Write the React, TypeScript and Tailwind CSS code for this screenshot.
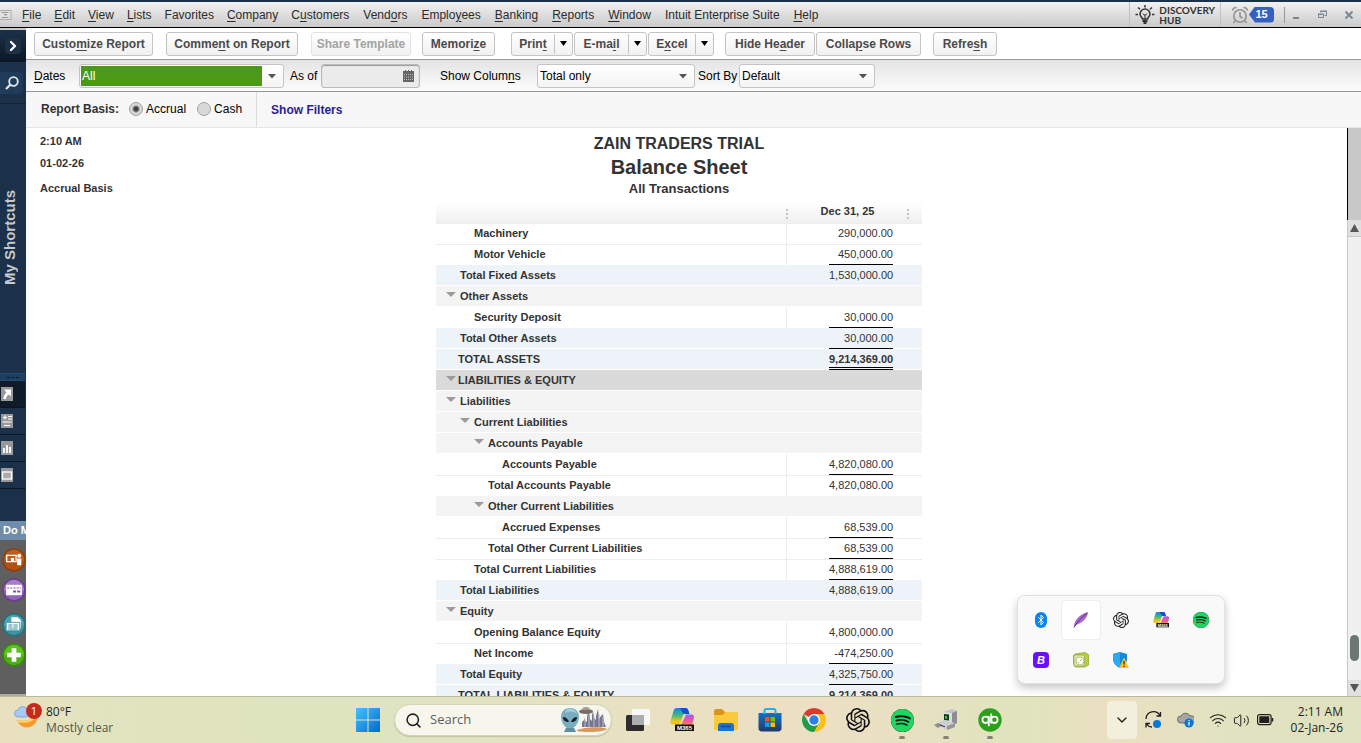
import type { ReactNode } from 'react';
import { SiOpenai, SiSpotify } from 'react-icons/si';
import { Bluetooth, ChevronDown, ChevronRight, Search, Wifi, Volume2 } from 'lucide-react';

type Tone = 'plain' | 'group' | 'total' | 'section';

interface ReportRow {
  label: string;
  indent: string;
  tone: Tone;
  amount?: string;
  rule?: 'single' | 'double';
  line?: boolean;
}

// indent is the left padding of the label, group rows keep 14px of it for the triangle
const ROWS: ReportRow[] = [
  { label: 'Machinery', indent: 'pl-[38px]', tone: 'plain', amount: '290,000.00', line: true },
  { label: 'Motor Vehicle', indent: 'pl-[38px]', tone: 'plain', amount: '450,000.00', rule: 'single', line: true },
  { label: 'Total Fixed Assets', indent: 'pl-6', tone: 'total', amount: '1,530,000.00' },
  { label: 'Other Assets', indent: 'pl-[10px]', tone: 'group' },
  { label: 'Security Deposit', indent: 'pl-[38px]', tone: 'plain', amount: '30,000.00', rule: 'single' },
  { label: 'Total Other Assets', indent: 'pl-6', tone: 'total', amount: '30,000.00', rule: 'single' },
  { label: 'TOTAL ASSETS', indent: 'pl-[22px]', tone: 'total', amount: '9,214,369.00', rule: 'double' },
  { label: 'LIABILITIES & EQUITY', indent: 'pl-[10px]', tone: 'section' },
  { label: 'Liabilities', indent: 'pl-[10px]', tone: 'group' },
  { label: 'Current Liabilities', indent: 'pl-6', tone: 'group' },
  { label: 'Accounts Payable', indent: 'pl-[38px]', tone: 'group' },
  { label: 'Accounts Payable', indent: 'pl-[66px]', tone: 'plain', amount: '4,820,080.00', rule: 'single' },
  { label: 'Total Accounts Payable', indent: 'pl-[52px]', tone: 'plain', amount: '4,820,080.00', line: true },
  { label: 'Other Current Liabilities', indent: 'pl-[38px]', tone: 'group' },
  { label: 'Accrued Expenses', indent: 'pl-[66px]', tone: 'plain', amount: '68,539.00', rule: 'single' },
  { label: 'Total Other Current Liabilities', indent: 'pl-[52px]', tone: 'plain', amount: '68,539.00', rule: 'single', line: true },
  { label: 'Total Current Liabilities', indent: 'pl-[38px]', tone: 'plain', amount: '4,888,619.00', rule: 'single', line: true },
  { label: 'Total Liabilities', indent: 'pl-6', tone: 'total', amount: '4,888,619.00' },
  { label: 'Equity', indent: 'pl-[10px]', tone: 'group' },
  { label: 'Opening Balance Equity', indent: 'pl-[38px]', tone: 'plain', amount: '4,800,000.00' },
  { label: 'Net Income', indent: 'pl-[38px]', tone: 'plain', amount: '-474,250.00', rule: 'single', line: true },
  { label: 'Total Equity', indent: 'pl-6', tone: 'total', amount: '4,325,750.00', rule: 'single' },
  { label: 'TOTAL LIABILITIES & EQUITY', indent: 'pl-[22px]', tone: 'total', amount: '9,214,369.00', rule: 'double' },
];

const TONES: Record<Tone, string> = {
  plain: 'bg-white',
  group: 'bg-[#f4f4f4] shadow-[inset_0_-1px_0_#fff]',
  total: 'bg-[#edf3f8] shadow-[inset_0_-1px_0_#fff]',
  section: 'bg-[#dadada] shadow-[inset_0_-1px_0_#fff]',
};

const LIST_MENUS = ['&File', '&Edit', '&View', '&Lists', 'Favorites', '&Company', 'C&ustomers'];
const WORK_MENUS = ['Vend&ors', 'Emplo&yees', '&Banking', '&Reports', '&Window', 'Intuit Enterprise Suite', '&Help'];

// "&" marks the access key
function Mnemonic({ text }: { text: string }) {
  const at = text.indexOf('&');
  if (at < 0) return <>{text}</>;
  return (
    <>
      {text.slice(0, at)}
      <span className="underline underline-offset-2">{text[at + 1]}</span>
      {text.slice(at + 2)}
    </>
  );
}

function ToolButton({ text, width, disabled }: { text: string; width: string; disabled?: boolean }) {
  return (
    <button
      type="button"
      disabled={disabled}
      className={`${width} h-6 shrink-0 rounded-[3px] border bg-gradient-to-b from-white to-[#f1f1f1] text-xs font-bold whitespace-nowrap ${
        disabled ? 'border-[#e2e2e2] text-[#a3a3a3]' : 'border-[#c4c4c4] text-[#4a4a4a]'
      }`}
    >
      <Mnemonic text={text} />
    </button>
  );
}

function SplitButton({ text, width }: { text: string; width: string }) {
  return (
    <div className={`${width} flex h-6 shrink-0 items-center rounded-[3px] border border-[#c4c4c4] bg-gradient-to-b from-white to-[#f1f1f1]`}>
      <button type="button" className="h-5 flex-1 text-xs font-bold text-[#4a4a4a]">
        <Mnemonic text={text} />
      </button>
      <button type="button" aria-label="More options" className="flex h-5 w-[18px] items-center justify-center border-l border-[#c4c4c4]">
        <svg width="7" height="5" viewBox="0 0 7 5"><path d="M0 0h7L3.500 5z" fill="#000" /></svg>
      </button>
    </div>
  );
}

function Combo({ id, value, width, active }: { id: string; value: string; width: string; active?: boolean }) {
  return (
    <div className={`${width} flex h-6 shrink-0 items-center rounded-[3px] border border-[#c4c4c4] bg-gradient-to-b from-white to-[#f4f4f4] p-px`}>
      <select
        id={id}
        defaultValue={value}
        className={`h-5 min-w-0 flex-1 appearance-none pl-px text-xs outline-none ${active ? 'bg-[#4b9a17] text-white' : 'text-black'}`}
      >
        <option value={value}>{value}</option>
      </select>
      <svg width="20" height="20" viewBox="0 0 20 20"><path d="M6 8h8l-4 4.500z" fill="#555" /></svg>
    </div>
  );
}

function MenuBar() {
  return (
    <header className="flex h-[28px] shrink-0 items-center border-t-2 border-b border-t-[#1b3149] border-b-black bg-gradient-to-b from-[#f1f1f1] to-[#cbcbcb] text-xs text-[#2b2b2b]">
      <svg width="12" height="10" viewBox="0 0 12 10" className="mr-[10px] shrink-0">
        <rect x="-1" y=".5" width="12" height="9" fill="#e2e2e2" stroke="#aaa" />
        <path d="M1.500 2.500h7M1.500 7.500h7" stroke="#999" />
        <path d="M3.500 4h4L5.500 6z" fill="#999" />
      </svg>
      <nav className="flex flex-1 gap-[14px]">
        <div className="flex gap-[13px]">
          {LIST_MENUS.map((m) => (
            <button key={m} type="button" className="whitespace-nowrap"><Mnemonic text={m} /></button>
          ))}
        </div>
        <div className="flex gap-[14px]">
          {WORK_MENUS.map((m) => (
            <button key={m} type="button" className="whitespace-nowrap"><Mnemonic text={m} /></button>
          ))}
        </div>
      </nav>
      <button type="button" className="flex h-full items-center gap-1 border-x border-[#c0c0c0] px-[5px] text-[#333]">
        <svg width="20" height="20" viewBox="0 0 20 20" fill="none" stroke="#333" strokeWidth="1.500">
          <path d="M7.500 14c0-1.500-2.500-2.300-2.500-5a5 5 0 0 1 10 0c0 2.700-2.500 3.500-2.500 5z" />
          <path d="M7.500 16h5M8.500 18h3" strokeWidth="2" />
          <path d="M10 0v2.500M3 2.500L5 4.200M17 2.500l-2 1.700M.5 9.500H3M17 9.500h2.500" />
          <path d="M8 8.500l1.200 1.500h1.600L12 8.500M10 10v4" strokeWidth="1" />
        </svg>
        <span className="flex flex-col text-left font-['Lato'] text-[10px] leading-[10px] font-bold">
          <span>DISCOVERY</span>
          <span>HUB</span>
        </span>
      </button>
      <div className="flex h-full items-center pl-[10px]">
        <svg width="18" height="18" viewBox="0 0 18 18" fill="none" stroke="#929292" strokeWidth="1.600">
          <circle cx="9" cy="10" r="6.200" />
          <path d="M9 6v4.500l2.500 1.500M1.500 4.500a4 4 0 0 1 4-3M16.500 4.500a4 4 0 0 0-4-3M4 15l-1.500 2M14 15l1.500 2" />
        </svg>
        <span className="flex h-4 w-[25px] items-center justify-center rounded-sm bg-[#365fc2] text-[11px] font-bold text-white [clip-path:polygon(0_50%,6px_0,100%_0,100%_100%,6px_100%)]">
          15
        </span>
        <span className="ml-[10px] h-4 w-px bg-[#999]" />
        <button type="button" aria-label="Minimize" className="ml-2">
          <svg width="7" height="12" viewBox="0 0 7 12"><path d="M0 8h6v2H0z" fill="#7a8794" /></svg>
        </button>
        <button type="button" aria-label="Restore" className="ml-[18px]">
          <svg width="9" height="9" viewBox="0 0 9 9" fill="none" stroke="#7a8794">
            <path d="M2.500 2.500v-1h6v4h-2M2 1h7" />
            <path d="M.5 4.500h5v3h-5zM0 4h6" />
          </svg>
        </button>
        <button type="button" aria-label="Close" className="mr-2 ml-[18px]">
          <svg width="8" height="8" viewBox="0 0 8 8" stroke="#7a8794" strokeWidth="2"><path d="M.5.5l7 7M7.500.5l-7 7" /></svg>
        </button>
      </div>
    </header>
  );
}

function Sidebar() {
  const tab = 'flex h-[27px] w-[25px] items-center border-b border-[#0c1622] pl-px';
  return (
    <aside className="flex w-[26px] shrink-0 flex-col overflow-hidden border-t-2 border-[#c9c9c9] bg-[#1b3149]">
      <div className="flex h-8 items-center justify-center bg-gradient-to-b from-[#1b3149] to-[#0b1725]">
        <button type="button" aria-label="Expand" className="rounded-sm bg-[#1e3044] text-white">
          <ChevronRight size={16} strokeWidth={3.5} />
        </button>
      </div>
      <button type="button" aria-label="Search" className="mt-[10px] flex h-[22px] w-[23px] items-center justify-center rounded-r-sm bg-[#213c5b]">
        <svg width="14" height="14" viewBox="0 0 14 14" fill="none" stroke="#e4e8ec" strokeWidth="1.800">
          <circle cx="8.500" cy="5.500" r="4.300" />
          <path d="M5.500 8.500L1 13" strokeWidth="2.200" />
        </svg>
      </button>
      <div className="mt-[9px] h-px bg-[#132435]" />
      <div className="flex h-[268px] items-center">
        <span className="rotate-180 text-[15px] leading-5 font-bold whitespace-nowrap text-[#c5c9cd] [writing-mode:vertical-rl]">
          My Shortcuts
        </span>
      </div>
      <div className="mt-px flex h-2 w-[25px] items-center justify-center border-y border-[#26496e] bg-[#1d3f63]">
        <span className="w-3 border-t border-dashed border-[#0c1c2c]" />
      </div>
      <button type="button" aria-label="Shortcuts" className={`${tab} bg-[#0f1b29]`}>
        <svg width="12" height="14" viewBox="0 0 12 14">
          <path d="M0 0h12v14H0z" fill="#999" />
          <path d="M3 2.500h7v7L8 7.500c-2 1-3 2.500-3 4.500H2.500c0-3 1-5 3-6.500z" fill="#fff" />
        </svg>
      </button>
      <button type="button" aria-label="Balances" className={tab}>
        <svg width="12" height="14" viewBox="0 0 12 14">
          <path d="M0 0h12v14H0z" fill="#999" />
          <path d="M2 3.500h4M4 1.500v4M7 2.500h4M7 5h4M1.500 8h9M3 11.500h6" stroke="#fff" strokeWidth="1.200" />
        </svg>
      </button>
      <button type="button" aria-label="Reports" className={tab}>
        <svg width="12" height="14" viewBox="0 0 12 14">
          <path d="M0 0h12v14H0z" fill="#999" />
          <path d="M3 12V7M6 12V4M9 12V6" stroke="#fff" strokeWidth="1.800" />
        </svg>
      </button>
      <button type="button" aria-label="Open windows" className={tab}>
        <svg width="12" height="14" viewBox="0 0 12 14">
          <path d="M0 0h12v14H0z" fill="#999" />
          <rect x="1.500" y="4" width="9" height="7" fill="#aaa" stroke="#fff" strokeWidth="1.300" />
        </svg>
      </button>
      <div className="mt-8 h-[19px] shrink-0 overflow-hidden bg-[#6f8cab] pl-[3px] text-[11px] leading-[18px] font-bold whitespace-nowrap text-white">
        Do More
      </div>
      <div className="flex flex-1 flex-col items-end border-b-2 border-[#aaa] bg-[#5f5f5f] pt-2">
        <CircleIcon label="Payroll" color="#c05f1b" dark="#8f3f0a">
          <path d="M4.500 7h9v6h-9z" fill="none" stroke="#fff" strokeWidth="1.200" />
          <path d="M8.500 9.500h3V13h-3zM14.500 10h4v6.500h-4z" fill="#fff" />
          <circle cx="16.500" cy="7.500" r="1.900" fill="#fff" />
        </CircleIcon>
        <div className="h-[6px]" />
        <CircleIcon label="Payments" color="#a97cc9" dark="#6b3a94">
          <path d="M4 6.500h15v10H4z" fill="#fff" />
          <path d="M5 9.500h13" stroke="#8354aa" strokeDasharray="2 1" />
          <path d="M10.500 12h3v2h-3zM14.500 12h3v2h-3z" fill="#8354aa" />
        </CircleIcon>
        <div className="h-[11px]" />
        <CircleIcon label="Order checks" color="#4fa3b0" dark="#1f7481">
          <path d="M9 4h6l3 3v8H9z" fill="#fff" />
          <path d="M4 9h13v8H4z" fill="#fff" stroke="#39909d" strokeWidth=".8" />
          <path d="M6 11.500h4M11 11.500h4M6 13.500h4M11 13.500h4M6 15.300h9" stroke="#39909d" />
        </CircleIcon>
        <div className="h-[6px]" />
        <CircleIcon label="Add" color="#5cc21f" dark="#348a0a">
          <path d="M11.500 5v13M5 11.500h13" stroke="#fff" strokeWidth="4.500" />
        </CircleIcon>
      </div>
    </aside>
  );
}

function CircleIcon({ label, color, dark, children }: { label: string; color: string; dark: string; children: ReactNode }) {
  return (
    <button type="button" aria-label={label} className="h-6 w-6">
      <svg width="24" height="24" viewBox="0 0 23 23">
        <circle cx="11.500" cy="11.500" r="10.500" fill={color} stroke={dark} strokeWidth="1.500" />
        <path d="M1.700 12a9.800 9.800 0 0 0 19.600 0z" fill={dark} opacity=".35" />
        {children}
      </svg>
    </button>
  );
}

function Toolbar() {
  return (
    <div className="flex h-8 shrink-0 items-center border-b border-[#999] bg-white pl-2">
      <ToolButton text="Custo&mize Report" width="w-[119px]" />
      <div className="w-[13px]" />
      <ToolButton text="Comme&nt on Report" width="w-[132px]" />
      <div className="w-[13px]" />
      <ToolButton text="Share Template" width="w-[100px]" disabled />
      <div className="w-[11px]" />
      <ToolButton text="Memori&ze" width="w-[73px]" />
      <div className="ml-4 flex gap-px">
        <SplitButton text="Prin&t" width="w-[62px]" />
        <SplitButton text="E-ma&il" width="w-[73px]" />
        <SplitButton text="E&xcel" width="w-[66px]" />
      </div>
      <div className="mr-3 ml-[11px] flex gap-px">
        <ToolButton text="Hide He&ader" width="w-[90px]" />
        <ToolButton text="Colla&pse Rows" width="w-[105px]" />
      </div>
      <ToolButton text="Refre&sh" width="w-[64px]" />
    </div>
  );
}

function Options() {
  return (
    <div className="flex h-8 shrink-0 items-center border-b border-[#999] bg-gradient-to-b from-[#e4e4e4] to-[#fcfcfc] pl-2 text-xs whitespace-nowrap text-black">
      <label htmlFor="dates" className="w-[45px]"><Mnemonic text="&Dates" /></label>
      <Combo id="dates" value="All" width="w-[205px]" active />
      <label htmlFor="asof" className="ml-[6px] w-[31px]">As of</label>
      <div className="flex h-6 w-[99px] items-center rounded-[3px] border border-[#bbb] bg-[#ebebeb] shadow-[inset_0_1px_1px_#999]">
        <input id="asof" type="text" className="h-5 min-w-0 flex-1 bg-transparent px-1 outline-none" />
        <svg width="11" height="12" viewBox="0 0 11 12" className="mr-[5px]">
          <path d="M0 1h11v11H0zM2 0h1v1H2zM5 0h1v1H5zM8 0h1v1H8z" fill="#666" />
          <path d="M1 4.500h9M1 7h9M1 9.500h9" stroke="#bbb" strokeDasharray="1 1" />
        </svg>
      </div>
      <label htmlFor="columns" className="ml-5 w-[97px]"><Mnemonic text="Show Colum&ns" /></label>
      <Combo id="columns" value="Total only" width="w-[158px]" />
      <label htmlFor="sort" className="ml-[3px] w-[41px]">Sort By</label>
      <Combo id="sort" value="Default" width="w-[136px]" />
    </div>
  );
}

function BasisBar() {
  const radio =
    'h-[14px] w-[14px] appearance-none rounded-full border border-[#a2a2a2] bg-[#d8d8d8] checked:bg-[radial-gradient(circle,#444_2px,#d8d8d8_4px)]';
  return (
    <div className="flex h-9 shrink-0 items-center border-b border-[#e6e6e6] bg-[#f7f7f7] pl-[15px] text-xs text-black">
      <div role="radiogroup" aria-labelledby="basis" className="flex h-full items-center border-r border-[#dcdcdc] pr-[14px] pb-px">
        <span id="basis" className="mr-[10px] font-bold text-[#333]">Report Basis:</span>
        <label className="mr-[11px] flex items-center gap-[3px]">
          <input type="radio" name="basis" defaultChecked className={radio} />
          Accrual
        </label>
        <label className="flex items-center gap-[3px]">
          <input type="radio" name="basis" className={radio} />
          Cash
        </label>
      </div>
      <a href="#filters" className="ml-[14px] font-bold text-[#2a1f8f]">Show Filters</a>
    </div>
  );
}

function Grip() {
  return (
    <svg width="2" height="11" viewBox="0 0 2 11" className="mt-1 shrink-0">
      <path d="M0 0h2v2H0zM0 4h2v2H0zM0 8h2v2H0z" fill="#c4c4c4" />
    </svg>
  );
}

function Report() {
  return (
    <div className="grid min-w-0 flex-1 grid-cols-[1fr_486px_1fr] overflow-hidden bg-white pr-[15px] text-[#333]">
      <div className="pt-[6px] pl-[14px] text-[11px] leading-[14px] font-bold">
        <p>2:10 AM</p>
        <p className="mt-2">01-02-26</p>
        <p className="mt-[11px]">Accrual Basis</p>
      </div>
      <div>
        <div className="pt-[6px] text-center font-bold">
          <h2 className="text-base leading-[20px]">ZAIN TRADERS TRIAL</h2>
          <h1 className="text-xl leading-[26px]">Balance Sheet</h1>
          <p className="text-[13px] leading-[18px]">All Transactions</p>
        </div>
        <table className="mt-1 w-full table-fixed border-separate border-spacing-0 text-[11px]">
          <colgroup>
            <col />
            <col className="w-[136px]" />
          </colgroup>
          <thead>
            <tr className="h-[21px] bg-gradient-to-b from-white to-[#f0f0f0]">
              <td className="p-0" />
              <th scope="col" className="p-0">
                <div className="flex h-[21px] items-center pr-[13px]">
                  <Grip />
                  <span className="flex-1 pb-[3px]">Dec 31, 25</span>
                  <Grip />
                </div>
              </th>
            </tr>
          </thead>
          <tbody>
            {ROWS.map((row, i) => {
              const line = row.line ? 'border-t border-[#ececec] leading-[18px]' : 'leading-[20px]';
              if (!row.amount) {
                return (
                  <tr key={i}>
                    <th colSpan={2} scope="rowgroup" className="p-0 text-left">
                      <div className={`flex h-[21px] items-center ${row.indent} ${TONES[row.tone]}`}>
                        <svg width="10" height="5" viewBox="0 0 10 5" className="mb-[5px] shrink-0"><path d="M0 0h10L5 5z" fill="#9b9b9b" /></svg>
                        <span className={row.tone === 'section' ? 'ml-[2px]' : 'ml-1'}>{row.label}</span>
                      </div>
                    </th>
                  </tr>
                );
              }
              const rule = row.rule === 'double' ? 'border-b-[3px] border-double border-black font-bold' : row.rule === 'single' ? 'border-b border-black' : '';
              return (
                <tr key={i}>
                  <th scope="row" className="p-0 text-left">
                    <div className={`h-[21px] ${row.indent} ${TONES[row.tone]} ${line}`}>{row.label}</div>
                  </th>
                  <td className="p-0">
                    <div className={`flex h-[21px] justify-end pr-[29px] ${TONES[row.tone]} ${line} ${row.tone === 'plain' ? 'border-l border-l-[#ececec]' : ''}`}>
                      <span className={`w-16 text-right whitespace-nowrap ${rule}`}>{row.amount}</span>
                    </div>
                  </td>
                </tr>
              );
            })}
          </tbody>
        </table>
      </div>
    </div>
  );
}

function ScrollBar() {
  return (
    <div className="flex w-[14px] shrink-0 flex-col border-l border-[#c8c8c8] bg-[#f0f0f0]">
      <div className="-ml-px h-[92px] border-l border-black bg-[#c8c8c8]" />
      <button type="button" aria-label="Scroll up" className="flex h-4 items-center justify-center bg-[#e0e0e0]">
        <svg width="9" height="8" viewBox="0 0 9 8"><path d="M4.500 0L9 8H0z" fill="#555" /></svg>
      </button>
      <div className="flex flex-1 flex-col items-center justify-end border-t border-[#c8c8c8] pb-[19px]">
        <div className="h-[26px] w-[9px] rounded-full bg-[#6d7575]" />
      </div>
      <button type="button" aria-label="Scroll down" className="flex h-4 items-center justify-center bg-[#e0e0e0]">
        <svg width="9" height="8" viewBox="0 0 9 8"><path d="M4.500 8L9 0H0z" fill="#555" /></svg>
      </button>
    </div>
  );
}

function CopilotIcon({ size }: { size: number }) {
  return (
    <svg width={size} height={size} viewBox="0 0 24 24">
      <defs>
        <linearGradient id="m365a" x1="0" y1="0" x2="0" y2="1">
          <stop offset="0" stopColor="#1b7fe0" />
          <stop offset=".4" stopColor="#35b88a" />
          <stop offset=".8" stopColor="#f0c419" />
        </linearGradient>
        <linearGradient id="m365b" x1="0" y1="0" x2="0" y2="1">
          <stop offset="0" stopColor="#a45cf0" />
          <stop offset=".6" stopColor="#f0569a" />
          <stop offset="1" stopColor="#f58a4a" />
        </linearGradient>
      </defs>
      <path d="M7 0h8c2 0 3 1 3.500 3l1 3h-4c-2 0-2.500 1-3 3L11 14c-.5 2-1.500 2.500-3 2.500H3C.5 16.500 0 15 .5 13L3.500 3C4 1 5 0 7 0z" fill="url(#m365a)" />
      <path d="M10 0h5c2 0 3 1 3.500 3l1 3h-4C13.500 6 12.500 5 12 3.500z" fill="#1651c8" />
      <path d="M16 6.500h5c2.500 0 3.500 1.500 3 3.500l-2 7H11z" fill="url(#m365b)" />
      <path d="M5 16.500h19V23H5z" fill="#111" />
      <text x="14.500" y="22" textAnchor="middle" fontSize="6" fontWeight="bold" fill="#fff" fontFamily="Liberation Sans">M365</text>
    </svg>
  );
}

function ShieldIcon() {
  return (
    <svg width="16" height="16" viewBox="0 0 16 16">
      <path d="M7 0l7 2v5c0 4-3 7-7 9-4-2-7-5-7-9V2z" fill="#1489dd" />
      <path d="M7 0v16c-4-2-7-5-7-9V2z" fill="#2aa9ee" />
      <path d="M11 5.500L16 16H6z" fill="#ffc20e" />
      <path d="M11 9v3.500M11 13.500V15" stroke="#222" strokeWidth="1.200" />
    </svg>
  );
}

function TrayPopup() {
  const cell = 'flex h-10 w-10 items-center justify-center';
  return (
    <div className="absolute right-[136px] bottom-[12px] grid grid-cols-[repeat(5,40px)] rounded-lg border border-[#e2e2e2] bg-[#f9f9f9] px-[3px] pt-1 pb-[3px] shadow-[0_4px_8px_rgba(0,0,0,0.22)]">
      <button type="button" aria-label="Bluetooth" className={cell}>
        <span className="flex h-4 w-3 items-center justify-center rounded-full bg-[#0a84f5] text-white"><Bluetooth size={12} /></span>
      </button>
      <button type="button" aria-label="Pen" className="flex h-10 w-10 items-center justify-center rounded border border-[#ededed] bg-white">
        <svg width="16" height="16" viewBox="0 0 16 16">
          <path d="M1 15C1 9 5 3 15 0c0 5-5 11-12 13z" fill="#a868cf" />
          <path d="M1 15.500C4 10 8 6 14 1" stroke="#5c2c83" fill="none" />
        </svg>
      </button>
      <button type="button" aria-label="ChatGPT" className={cell}><SiOpenai size={16} color="#222" /></button>
      <button type="button" aria-label="Copilot" className={cell}><CopilotIcon size={16} /></button>
      <button type="button" aria-label="Spotify" className={cell}>
        <span className="rounded-full bg-[#121212]"><SiSpotify size={16} color="#1ed760" /></span>
      </button>
      <button type="button" aria-label="Bolt" className={cell}>
        <span className="flex h-4 w-4 items-center justify-center rounded bg-[#6a12ff] text-[11px] font-bold text-white italic">B</span>
      </button>
      <button type="button" aria-label="Updater" className={cell}>
        <svg width="16" height="16" viewBox="0 0 16 16">
          <path d="M2 2l10-1.500 3.500 2V13L12 15H2L.5 12V3.500z" fill="#b9cf3a" stroke="#8b9d31" strokeWidth=".7" />
          <rect x="1" y="3" width="10.500" height="11" rx="1.500" fill="#dde6a3" stroke="#96a65c" strokeWidth=".7" />
          <circle cx="7" cy="9" r="4" fill="#fff" stroke="#b9c47a" />
          <path d="M7 9l2-2M5 11l1-1" stroke="#a8bb45" />
        </svg>
      </button>
      <button type="button" aria-label="Windows Security" className={cell}><ShieldIcon /></button>
    </div>
  );
}

function TaskIcon({ label, running, children }: { label: string; running?: boolean; children: ReactNode }) {
  return (
    <button type="button" aria-label={label} className="relative flex h-full w-11 items-center justify-center">
      {children}
      {running && <span className="absolute bottom-1 h-[3px] w-[6px] rounded-full bg-[#858370]" />}
    </button>
  );
}

function Taskbar() {
  return (
    <footer className="grid h-[47px] shrink-0 grid-cols-[1fr_auto_1fr] border-t border-[#b9b99b] bg-[linear-gradient(to_right,#e9e0c0,#dfe4bf_10%,#dfe4c0_30%,#e9e1c2_48%,#eddfc4_60%,#e0e3be_75%,#ebdfc1_82%,#e1e3c0_90%,#e0e1be)] font-['Open_Sans'] text-xs text-[#1f1f1f]">
      <button type="button" className="flex items-center pl-[14px] text-left">
        <svg width="32" height="32" viewBox="0 0 32 32" className="-mt-1 shrink-0">
          <path d="M3 18a10 10 0 1 0 20-6c-4 6-12 8-20 6z" fill="#f69a2b" />
          <path d="M4 19c7 2 14 0 19-6" fill="none" stroke="#ffd36a" strokeWidth="2" />
          <path d="M4 15a3.500 3.500 0 0 1 0-7 5 5 0 0 1 9-1v8z" fill="#a9c8f4" stroke="#7fa5e0" />
          <circle cx="20" cy="9" r="8" fill="#c42b1c" />
          <text x="20" y="13" textAnchor="middle" fontSize="11" fill="#fff" fontFamily="Open Sans">1</text>
        </svg>
        <span className="leading-4">
          80°F<br />
          <span className="text-[#555447]">Mostly clear</span>
        </span>
      </button>
      <div className="flex items-center pr-[3px]">
        <TaskIcon label="Start">
          <svg width="24" height="24" viewBox="0 0 24 24">
            <defs>
              <linearGradient id="win" x1="0" y1="0" x2="1" y2="1">
                <stop offset="0" stopColor="#44c4fb" />
                <stop offset="1" stopColor="#0468cf" />
              </linearGradient>
            </defs>
            <path d="M0 0h11.500v11.500H0zM12.500 0H24v11.500H12.500zM0 12.500h11.500V24H0zM12.500 12.500H24V24H12.500z" fill="url(#win)" />
          </svg>
        </TaskIcon>
        <div className="mx-1 flex h-8 w-[218px] items-center rounded-full border border-[#d4d4b8] bg-[#f7f6ed] pr-[2px] pl-[10px] shadow-[0_1px_1px_rgba(0,0,0,0.15)]">
          <Search size={17} strokeWidth={2.2} className="shrink-0" />
          <input type="text" aria-label="Search" placeholder="Search" className="ml-2 min-w-0 flex-1 bg-transparent text-[13px] outline-none placeholder:text-[#5e5e58]" />
          <svg width="48" height="26" viewBox="0 0 48 26" className="shrink-0">
            <path d="M16 23c6-3 26-4 30-1-2 3-20 4-30 2z" fill="#d9985c" />
            <path d="M21 20v-5l2-2v-3l1 4 2 1V9l2-5 1 8 2 2V8l1-4 1 7 2 2V9l2-7 1 10 2-3 2-2 1 8 2 5z" fill="#77778f" />
            <path d="M24 12v8M28 8v12M33 9v11M38 7v13M42 10v10" stroke="#b9bccb" />
            <ellipse cx="25" cy="4.500" rx="7" ry="2.500" fill="#786d65" />
            <path d="M21 3a4 3 0 0 1 8 0z" fill="#a39b92" />
            <path d="M9 1c6 0 9 4 9 9 0 6-5 12-9 12S0 16 0 10c0-5 3-9 9-9z" fill="#79aebf" />
            <path d="M7 2c4-1 8 1 9 5-4-3-8-3-12-1 0-2 1-3 3-4z" fill="#a5cdd8" />
            <path d="M5 21h8l2 4H3z" fill="#5b8e9f" />
            <path d="M2 10c3 0 5 2 6 5-4 0-6-2-6-5zM16 10c-3 0-5 2-6 5 4 0 6-2 6-5z" fill="#15212a" />
          </svg>
        </div>
        <TaskIcon label="Task view">
          <svg width="24" height="24" viewBox="0 0 24 24">
            <rect x="6" y="1" width="18" height="16" rx="1.500" fill="#f8f8f8" />
            <rect x="0" y="7" width="18" height="16" rx="1.500" fill="#2c2c2c" />
            <path d="M6 7h12v10H6z" fill="#adadad" />
          </svg>
        </TaskIcon>
        <TaskIcon label="Microsoft 365 Copilot"><CopilotIcon size={24} /></TaskIcon>
        <TaskIcon label="File Explorer">
          <svg width="24" height="22" viewBox="0 0 24 22">
            <path d="M0 2c0-1 .5-2 2-2h6l3 3h11c1.500 0 2 1 2 2v6H0z" fill="#d9951a" />
            <path d="M0 6h9l2-3h11c1.500 0 2 1 2 2v16H0z" fill="#fbc93c" />
            <path d="M4 17c0-2 1-3 2.500-3h11c1.500 0 2.500 1 2.500 3v5H4z" fill="#1778c9" />
            <path d="M7 17.500h10" stroke="#0c4f92" strokeWidth="1.500" />
          </svg>
        </TaskIcon>
        <TaskIcon label="Store">
          <svg width="24" height="24" viewBox="0 0 24 24">
            <defs>
              <linearGradient id="store" x1="0" y1="0" x2="0" y2="1">
                <stop offset="0" stopColor="#1373c6" />
                <stop offset="1" stopColor="#23376a" />
              </linearGradient>
            </defs>
            <path d="M.5 5h23v15c0 2-1 3.500-3.500 3.500H4C1.500 23.500.5 22 .5 20z" fill="url(#store)" />
            <path d="M6.500 6V3c0-1.500 1-2 2-2h7c1 0 2 .5 2 2v3" fill="none" stroke="#24b0f0" strokeWidth="2" />
            <path d="M7 9h4.500v4.500H7z" fill="#f25022" />
            <path d="M12.500 9H17v4.500h-4.500z" fill="#7fba00" />
            <path d="M7 14.500h4.500V19H7z" fill="#00a4ef" />
            <path d="M12.500 14.500H17V19h-4.500z" fill="#ffb900" />
          </svg>
        </TaskIcon>
        <TaskIcon label="Chrome">
          <svg width="24" height="24" viewBox="0 0 24 24">
            <path d="M12 12L1.610 6A12 12 0 0 1 22.390 6z" fill="#db3b2b" />
            <path d="M12 6h10.390A12 12 0 0 1 12 24l5.200-9z" fill="#fbc116" />
            <path d="M1.610 6A12 12 0 0 0 12 24l5.200-9H6.800z" fill="#1f9c4a" />
            <circle cx="12" cy="12" r="6" fill="#fff" />
            <circle cx="12" cy="12" r="4.700" fill="#2f7de9" />
          </svg>
        </TaskIcon>
        <TaskIcon label="ChatGPT"><SiOpenai size={24} color="#111" /></TaskIcon>
        <TaskIcon label="Spotify" running>
          <span className="rounded-full bg-[#121212]"><SiSpotify size={23} color="#1ed760" /></span>
        </TaskIcon>
        <TaskIcon label="Installer" running>
          <svg width="24" height="24" viewBox="0 0 24 24">
            <path d="M9 4l9-3 5 2v12l-5 3-9-3z" fill="#c4c4c6" />
            <path d="M18 5l5-2v12l-5 3z" fill="#8d8d92" />
            <path d="M9 4l9 1v10l-9-1z" fill="#dcdcde" />
            <path d="M10 6l5 .5v6l-5-.5z" fill="#163a1d" />
            <path d="M11 8l2 .2v2.500l-2-.2z" fill="#36d44a" />
            <path d="M3 15l7-3 11 3v4l-8 3-10-4z" fill="#cfcfd1" />
            <path d="M13 18l8-3v4l-8 3z" fill="#97979b" />
            <path d="M0 17l4-2 4 2-4 3z" fill="#8d8d92" />
            <path d="M6 17l5 1.800" stroke="#333" />
          </svg>
        </TaskIcon>
        <TaskIcon label="QuickBooks" running>
          <svg width="24" height="24" viewBox="0 0 24 24" fill="none" stroke="#fff" strokeWidth="1.800">
            <circle cx="12" cy="12" r="11.700" fill="#2ca01c" stroke="none" />
            <circle cx="7.600" cy="11.800" r="3.200" />
            <path d="M10.800 8v10.200" />
            <circle cx="16.400" cy="11.800" r="3.200" />
            <path d="M13.200 5.500v10" />
          </svg>
        </TaskIcon>
      </div>
      <div className="flex items-center justify-end pr-[18px]">
        <button type="button" aria-label="Show hidden icons" className="mr-2 flex h-[38px] w-[30px] items-center justify-center rounded bg-[#f2f0dc]">
          <ChevronDown size={16} />
        </button>
        <svg width="17" height="18" viewBox="0 0 17 18" fill="none" stroke="#1f1f1f" strokeWidth="1.300" className="mr-[15px] shrink-0">
          <path d="M1 8a7.500 7.500 0 0 1 14-3.500M15.500 1v4h-4M1 16.500v-4h4M1 12.500a7.500 7.500 0 0 0 6 3.500" />
          <circle cx="12" cy="13" r="4" fill="#0b78d4" stroke="none" />
        </svg>
        <svg width="17" height="16" viewBox="0 0 17 16" className="mr-[15px] shrink-0">
          <path d="M4 11a3.500 3.500 0 0 1 0-7 5 5 0 0 1 9 0 3.500 3.500 0 0 1 2 7z" fill="#a5a5a5" stroke="#555" strokeWidth=".8" />
          <circle cx="12" cy="11" r="4.600" fill="#0b78d4" />
          <path d="M12 10v3.500M12 8v1" stroke="#fff" strokeWidth="1.300" />
        </svg>
        <Wifi size={18} strokeWidth={1.600} className="mr-[6px] shrink-0" />
        <Volume2 size={17} strokeWidth={1.400} className="mr-[7px] shrink-0" />
        <svg width="17" height="12" viewBox="0 0 17 12" className="mr-[17px] shrink-0">
          <rect x=".6" y=".6" width="13.500" height="10" rx="2" fill="none" stroke="#1f1f1f" strokeWidth="1.200" />
          <rect x="2.300" y="2.300" width="10" height="6.600" rx=".5" fill="#1f1f1f" />
          <path d="M15.500 4v3.500" stroke="#1f1f1f" strokeWidth="1.500" />
        </svg>
        <p className="shrink-0 text-right leading-4 whitespace-nowrap">
          2:11 AM<br />02-Jan-26
        </p>
      </div>
    </footer>
  );
}

export default function App() {
  return (
    <div className="flex h-screen flex-col overflow-hidden bg-white font-['Liberation_Sans',sans-serif]">
      <MenuBar />
      <div className="relative flex min-h-0 flex-1">
        <Sidebar />
        <main className="flex min-w-0 flex-1 flex-col">
          <Toolbar />
          <Options />
          <BasisBar />
          <div className="flex min-h-0 flex-1">
            <Report />
            <ScrollBar />
          </div>
        </main>
        <TrayPopup />
      </div>
      <Taskbar />
    </div>
  );
}
